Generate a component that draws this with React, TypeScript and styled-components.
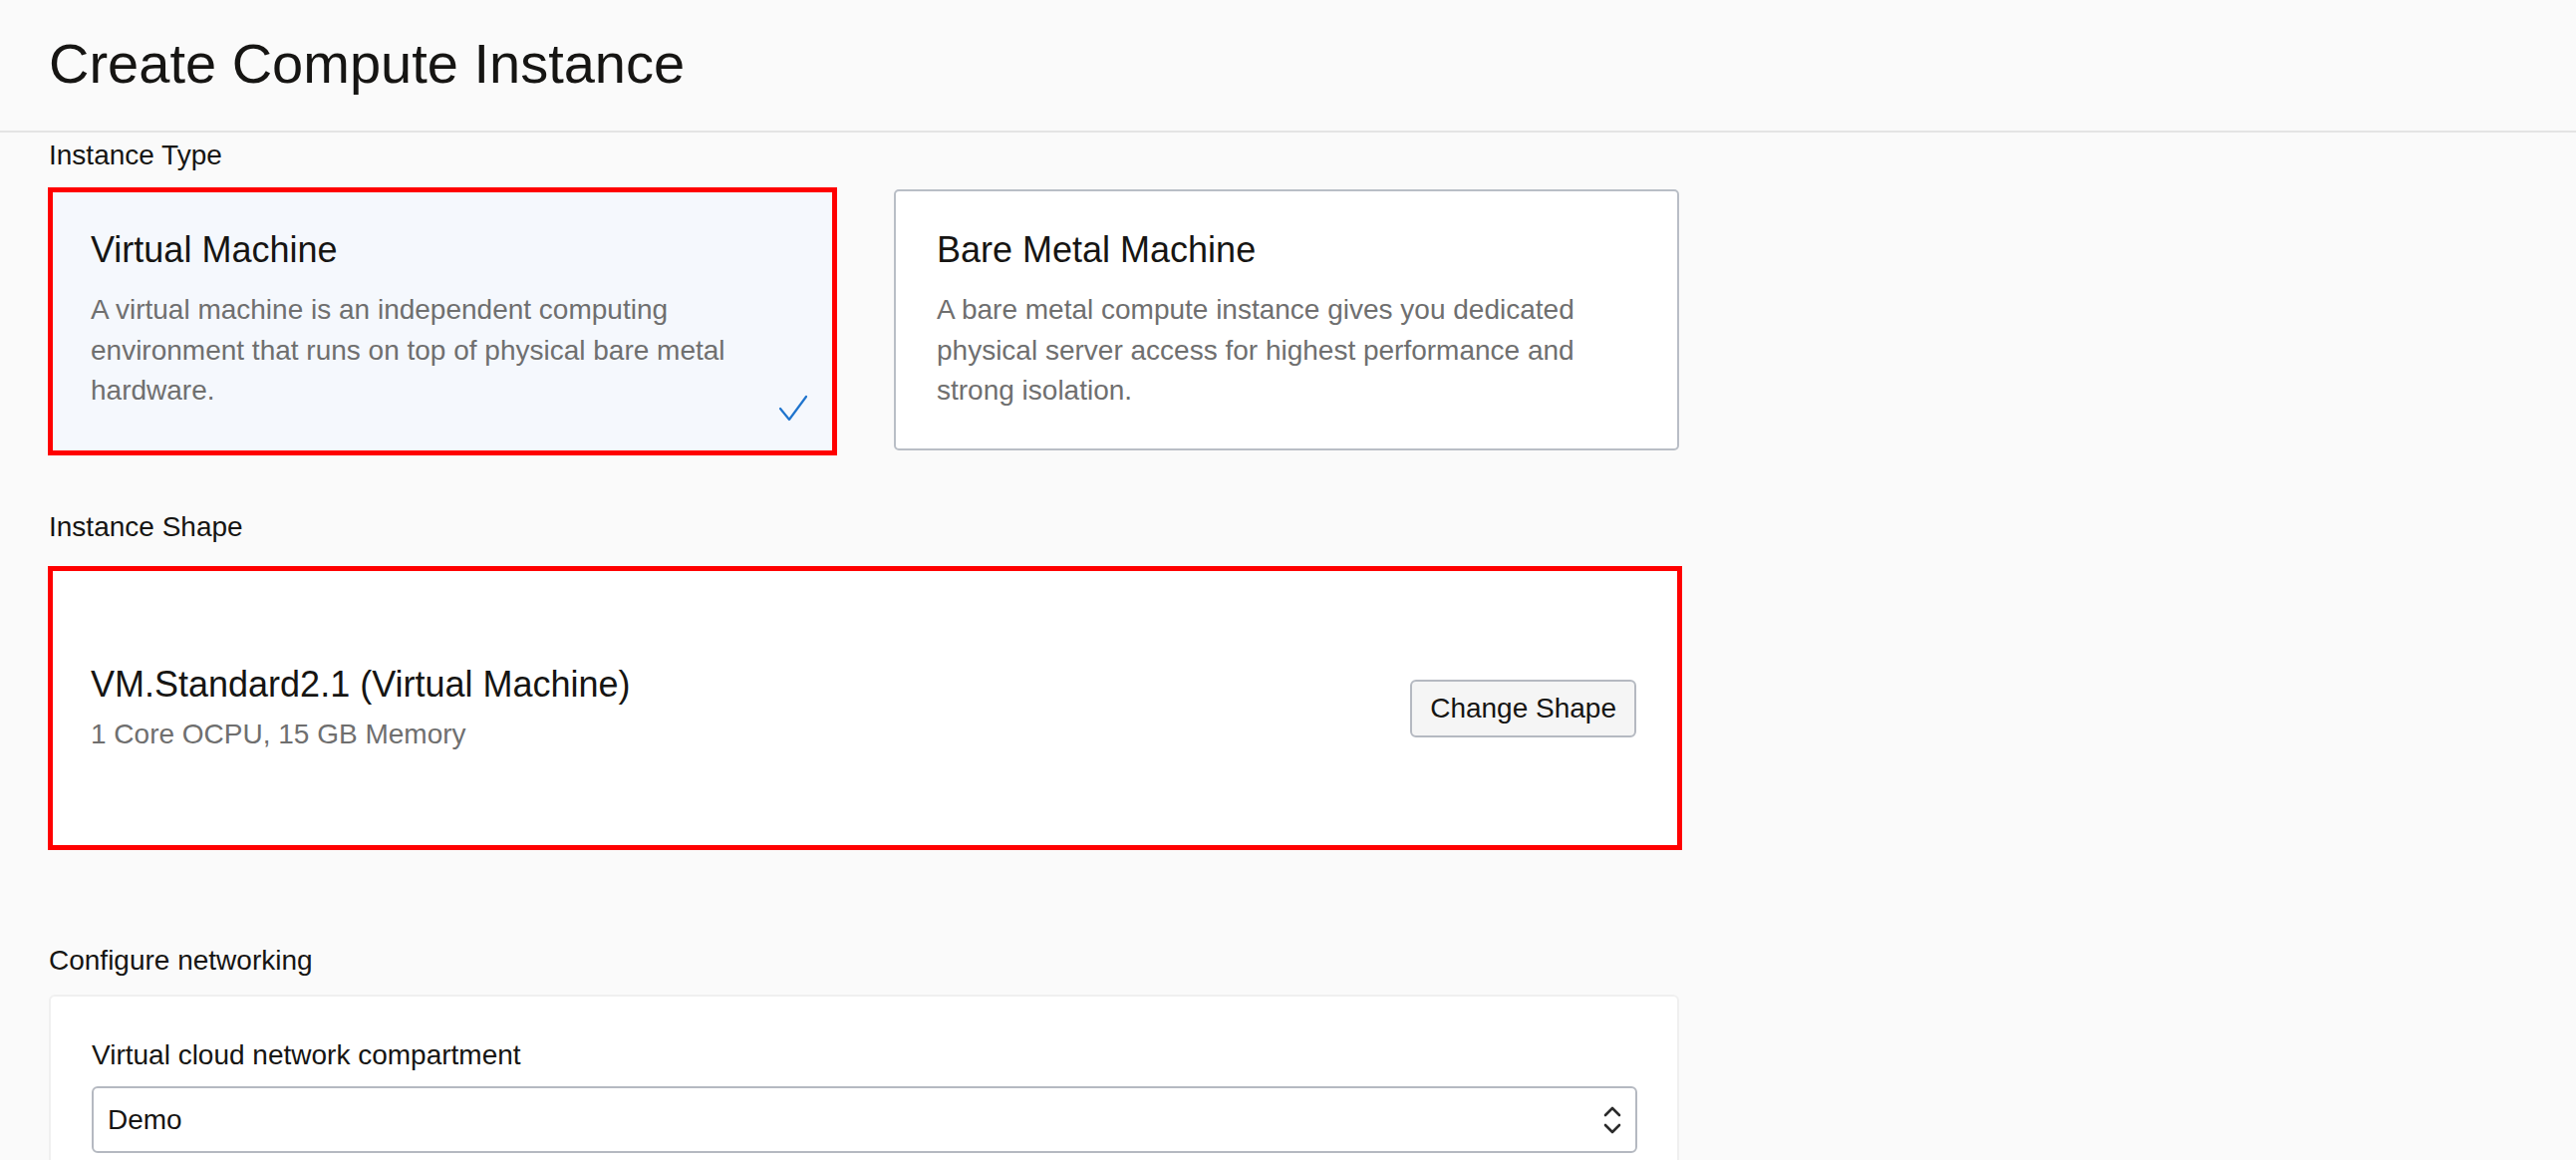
import React from "react";
import styled, { createGlobalStyle, css } from "styled-components";

const GlobalStyle = createGlobalStyle`
  html, body {
    margin: 0;
    padding: 0;
    background: #fafafa;
    font-family: "Liberation Sans", Arial, Helvetica, sans-serif;
    color: #161513;
  }
  * { box-sizing: border-box; }
`;

const Page = styled.div`
  min-height: 100vh;
  background: #fafafa;
`;

const Header = styled.header`
  height: 133px;
  padding: 32px 0 0 49px;
  border-bottom: 2px solid #e4e4e4;
`;

const Title = styled.h1`
  margin: 0;
  font-size: 56px;
  line-height: 64px;
  font-weight: 400;
  color: #161513;
`;

const Main = styled.main`
  padding: 0 0 0 48px;
  display: flex;
  flex-direction: column;
`;

const Section = styled.section<{ $top: number }>`
  margin-top: ${(p) => p.$top}px;
  display: flex;
  flex-direction: column;
`;

const Label = styled.div<{ $after: number; $indent?: number }>`
  font-size: 28px;
  line-height: 40px;
  color: #161513;
  padding-left: ${(p) => p.$indent ?? 1}px;
  margin-bottom: ${(p) => p.$after}px;
`;

const CardRow = styled.div`
  display: flex;
  align-items: flex-start;
  gap: 57px;
`;

const TypeCard = styled.div<{ $selected?: boolean }>`
  position: relative;
  ${(p) =>
    p.$selected
      ? css`
          width: 792px;
          height: 269px;
          border: 5px solid #ff0000;
          background: #f5f8fd;
          padding: 36px 39px 0 38px;
        `
      : css`
          width: 788px;
          height: 262px;
          margin-top: 2px;
          border: 2px solid #b9bec6;
          border-radius: 5px;
          background: #ffffff;
          padding: 37px 39px 0 41px;
        `}
`;

const CardTitle = styled.div`
  font-size: 36px;
  line-height: 44px;
  color: #161513;
`;

const CardText = styled.p`
  margin: 18px 0 0;
  font-size: 28px;
  line-height: 40.5px;
  color: #6f6f6f;
`;

const Check = styled.svg`
  position: absolute;
  right: 24px;
  bottom: 28px;
  width: 30px;
  height: 28px;
`;

const ShapeBox = styled.div`
  width: 1640px;
  height: 285px;
  border: 5px solid #ff0000;
  background: #ffffff;
  display: flex;
  align-items: center;
  justify-content: space-between;
  padding: 0 41px 0 38px;
`;

const ShapeInfo = styled.div`
  display: flex;
  flex-direction: column;
  gap: 8px;
`;

const ShapeSub = styled.div`
  font-size: 28px;
  line-height: 40px;
  color: #6f6f6f;
`;

const Button = styled.button`
  height: 58px;
  padding: 0 18px;
  border: 2px solid #b5b9c1;
  border-radius: 6px;
  background: #f5f5f5;
  font-family: inherit;
  font-size: 28px;
  color: #161513;
  cursor: pointer;
`;

const NetCard = styled.div`
  width: 1636px;
  margin-left: 1px;
  background: #ffffff;
  border: 2px solid #f0f0f0;
  border-radius: 6px;
  padding: 39px 40px 60px 41px;
  display: flex;
  flex-direction: column;
`;

const Select = styled.div`
  height: 67px;
  border: 2px solid #b5b9c1;
  border-radius: 6px;
  background: #ffffff;
  display: flex;
  align-items: center;
  justify-content: space-between;
  padding: 0 13px 0 14px;
  font-size: 28px;
  color: #161513;
`;

const Chevrons = styled.svg`
  width: 20px;
  height: 32px;
`;

export default function App() {
  return (
    <Page>
      <GlobalStyle />
      <Header>
        <Title>Create Compute Instance</Title>
      </Header>
      <Main>
        <Section $top={3}>
          <Label $after={12}>Instance Type</Label>
          <CardRow>
            <TypeCard $selected>
              <CardTitle>Virtual Machine</CardTitle>
              <CardText>
                A virtual machine is an independent computing environment that
                runs on top of physical bare metal hardware.
              </CardText>
              <Check viewBox="0 0 30 28" fill="none">
                <path
                  d="M2 14 L11 25 L28 2"
                  stroke="#1f74cd"
                  strokeWidth="2.2"
                  strokeLinecap="round"
                  strokeLinejoin="round"
                />
              </Check>
            </TypeCard>
            <TypeCard>
              <CardTitle>Bare Metal Machine</CardTitle>
              <CardText>
                A bare metal compute instance gives you dedicated physical
                server access for highest performance and strong isolation.
              </CardText>
            </TypeCard>
          </CardRow>
        </Section>

        <Section $top={52}>
          <Label $after={19}>Instance Shape</Label>
          <ShapeBox>
            <ShapeInfo>
              <CardTitle>VM.Standard2.1 (Virtual Machine)</CardTitle>
              <ShapeSub>1 Core OCPU, 15 GB Memory</ShapeSub>
            </ShapeInfo>
            <Button type="button">Change Shape</Button>
          </ShapeBox>
        </Section>

        <Section $top={91}>
          <Label $after={14}>Configure networking</Label>
          <NetCard>
            <Label $after={11} $indent={0}>
              Virtual cloud network compartment
            </Label>
            <Select>
              <span>Demo</span>
              <Chevrons viewBox="0 0 20 32" fill="none">
                <path
                  d="M3 11 L10 4 L17 11"
                  stroke="#2b2b2b"
                  strokeWidth="2.6"
                  strokeLinecap="round"
                  strokeLinejoin="round"
                />
                <path
                  d="M3 21 L10 28 L17 21"
                  stroke="#2b2b2b"
                  strokeWidth="2.6"
                  strokeLinecap="round"
                  strokeLinejoin="round"
                />
              </Chevrons>
            </Select>
          </NetCard>
        </Section>
      </Main>
    </Page>
  );
}
